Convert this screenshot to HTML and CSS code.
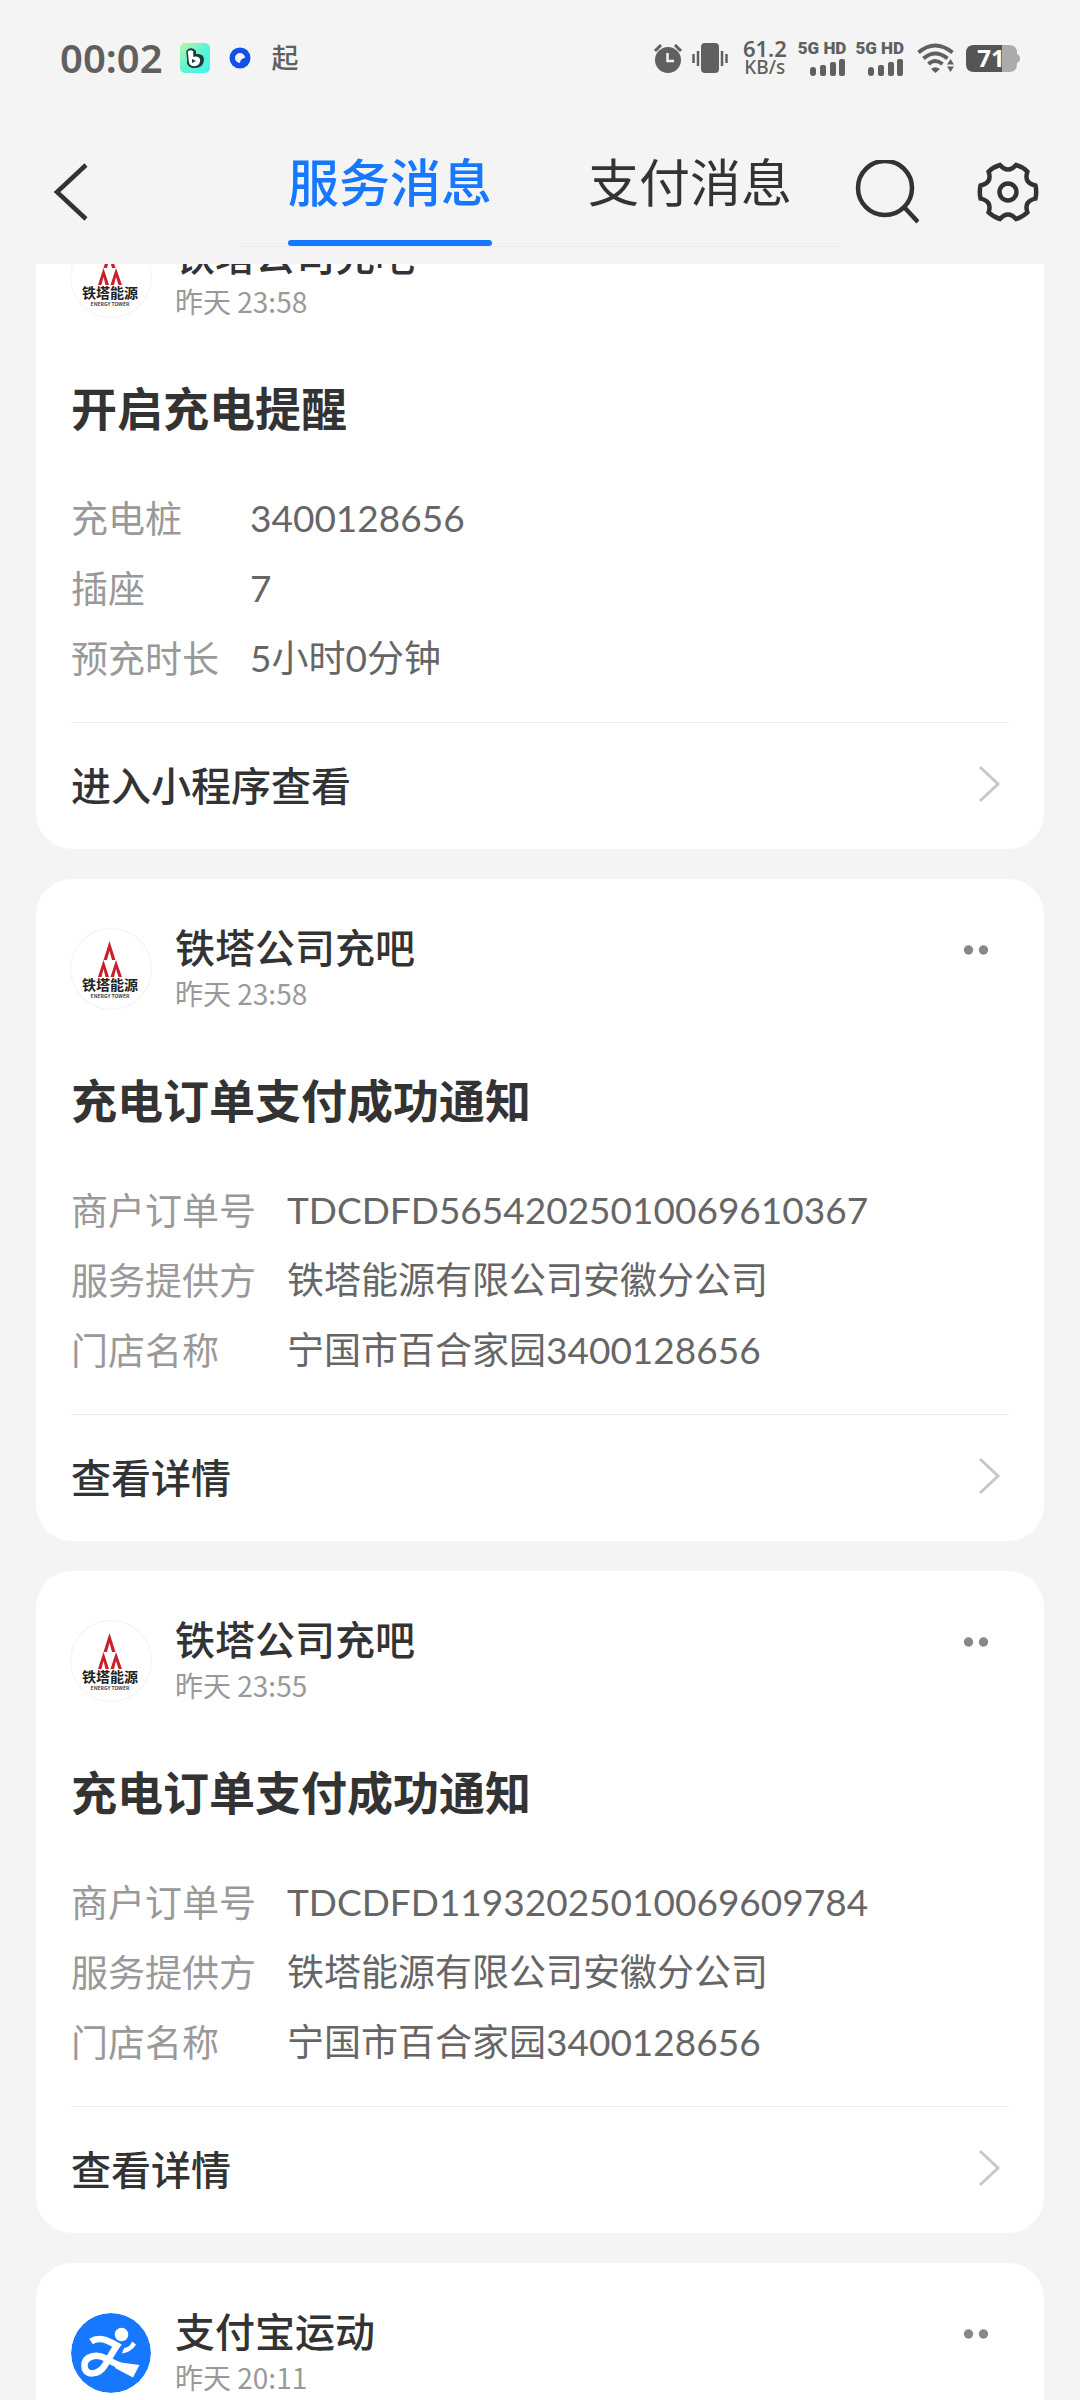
FILE: index.html
```html
<!DOCTYPE html>
<html lang="zh-CN">
<head>
<meta charset="utf-8">
<meta name="viewport" content="width=device-width, initial-scale=1">
<title>服务消息</title>
<link rel="stylesheet" href="styles.css">
</head>
<body>
<svg class="defs" aria-hidden="true">
  <symbol id="tower" viewBox="0 0 80 80">
    <g fill="#c8202c">
      <path d="M38.500 12L44.500 31H41L38.500 22L36 31H32.500Z"/>
      <path d="M32.500 31L38 48H34.500L32.500 40L30.500 48H27Z"/>
      <path d="M45 31L51 48H47.500L45 40L43 48H39.500Z"/>
    </g>
    <text x="39" y="61" class="tower-cn">铁塔能源</text>
    <text x="39" y="69" class="tower-en">ENERGY TOWER</text>
  </symbol>
  <symbol id="next" viewBox="0 0 24 40">
    <path d="M3 3L21 20L3 37" fill="none" stroke="#c8c8c8" stroke-width="3"/>
  </symbol>
  <symbol id="dots" viewBox="0 0 26 12">
    <circle cx="5.500" cy="6" r="4.700" fill="#888"/><circle cx="20.500" cy="6" r="4.700" fill="#888"/>
  </symbol>
  <symbol id="signal" viewBox="0 0 36 17">
    <rect x="0" y="8" width="6" height="9" rx="3"/><rect x="10" y="6" width="6" height="11" rx="2"/><rect x="20" y="3" width="6" height="14" rx="2"/><rect x="29" y="0" width="6" height="17" rx="2"/>
  </symbol>
</svg>

<div class="app">
  <header class="top">
    <div class="status">
      <span class="clock">00:02</span>
      <svg class="app-b" viewBox="0 0 30 30" width="30" height="30">
        <defs><linearGradient id="bg" x1="0" y1="0" x2="1" y2="1"><stop offset="0" stop-color="#b9f5a8"/><stop offset=".5" stop-color="#5ff3d0"/><stop offset="1" stop-color="#3ff5f5"/></linearGradient></defs>
        <rect width="30" height="30" rx="5" fill="url(#bg)"/>
        <path d="M8 6Q13 4 16 8V11Q24 10 24 17Q23 25 15 25Q8 25 7 20Z" fill="#1c3a38"/>
        <path d="M7 8Q11 5 14 8V13Q20 12 21 17Q21 23 15 24Q8 24 8 18Z" fill="#fff" stroke="#1c3a38" stroke-width="1.500"/>
        <path d="M12 16L16 18L12 20Z" fill="#1c3a38"/>
      </svg>
      <svg class="app-o" viewBox="0 0 22 22" width="22" height="22">
        <circle cx="11" cy="11" r="10.500" fill="#1450e6"/>
        <path d="M16 11A5 5 0 1 0 11 16Q11 13 13 12Q14 11 16 11Z" fill="#f4f4f4"/>
      </svg>
      <span class="qi">起</span>
      <div class="sys">
        <svg viewBox="0 0 30 30" width="30" height="30">
          <circle cx="15" cy="17" r="13"/><path d="M2 8L8 2M28 8L22 2" stroke="#606060" stroke-width="3"/><path d="M14.500 10V18H21" fill="none" stroke="#f4f4f4" stroke-width="2.500"/>
        </svg>
        <svg viewBox="0 0 36 30" width="36" height="30">
          <rect x="9" y="0" width="18" height="30" rx="4"/><path d="M1.500 11V20M6 8V23M34.500 11V20M30 8V23" stroke="#606060" stroke-width="2.500"/>
        </svg>
        <span class="rate"><b>61.2</b><span>KB/s</span></span>
        <span class="sim"><b>5G HD</b><svg viewBox="0 0 36 17" width="36" height="17"><use href="#signal"/></svg></span>
        <span class="sim"><b>5G HD</b><svg viewBox="0 0 36 17" width="36" height="17"><use href="#signal"/></svg></span>
        <svg class="wifi" viewBox="0 0 38 30" width="38" height="30">
          <g fill="none" stroke="#606060" stroke-width="4"><path d="M1.500 9.500Q18 -4.500 35.500 9.500"/><path d="M6.500 15.500Q18 5.500 30.500 15.500"/><path d="M11.500 21Q18 15 25.500 21"/></g>
          <path d="M14 26Q18 22.500 23 26L18.500 30Z"/><path d="M33.500 16L37 21.500H30ZM33.500 29L37 23.500H30Z"/>
        </svg>
        <svg class="battery" viewBox="0 0 54 27" width="54" height="27">
          <path d="M36 0H43Q51 0 51 8V9Q54 10 54 13.500Q54 17 51 18V19Q51 27 43 27H36Z" fill="#ababab"/>
          <path d="M8 0H36V27H8Q0 27 0 19V8Q0 0 8 0Z" fill="#555"/>
          <text x="25" y="22" class="pct">71</text>
        </svg>
      </div>
    </div>
    <nav class="nav">
      <button class="back" aria-label="返回"><svg viewBox="0 0 36 60" width="36" height="60"><path d="M33 3L4 30L33 57" fill="none" stroke="#333" stroke-width="4.500"/></svg></button>
      <div class="tabs">
        <button class="tab active">服务消息</button>
        <button class="tab">支付消息</button>
      </div>
      <div class="tools">
        <button aria-label="搜索"><svg viewBox="0 0 64 64" width="64" height="64"><g fill="none" stroke="#333" stroke-width="4.500"><circle cx="30" cy="28" r="27"/><path d="M49 47L63 62"/></g></svg></button>
        <button aria-label="设置"><svg viewBox="-32 -32 64 64" width="64" height="64"><g fill="none" stroke="#333" stroke-width="4.500"><circle r="8.500"/><path d="M-8 -27Q0 -18 8 -27A28 28 0 0 1 19.400 -20.400Q15.600 -9 27.400 -6.600A28 28 0 0 1 27.400 6.600Q15.600 9 19.400 20.400A28 28 0 0 1 8 27Q0 18 -8 27A28 28 0 0 1 -19.400 20.400Q-15.600 9 -27.400 6.600A28 28 0 0 1 -27.400 -6.600Q-15.600 -9 -19.400 -20.400A28 28 0 0 1 -8 -27Z"/></g></svg></button>
      </div>
    </nav>
  </header>

  <main class="feed">
    <div class="list">
      <article class="card">
        <div class="head">
          <svg class="avatar ring" viewBox="0 0 80 80"><use href="#tower"/></svg>
          <div class="who"><div class="name">铁塔公司充吧</div><time class="time">昨天 23:58</time></div>
          <button class="more" aria-label="更多"><svg width="26" height="12"><use href="#dots"/></svg></button>
        </div>
        <h2 class="title">开启充电提醒</h2>
        <dl class="rows">
          <dt>充电桩</dt><dd>3400128656</dd>
          <dt>插座</dt><dd>7</dd>
          <dt>预充时长</dt><dd>5小时0分钟</dd>
        </dl>
        <a class="foot" href="#">进入小程序查看<svg width="24" height="40"><use href="#next"/></svg></a>
      </article>

      <article class="card">
        <div class="head">
          <svg class="avatar ring" viewBox="0 0 80 80"><use href="#tower"/></svg>
          <div class="who"><div class="name">铁塔公司充吧</div><time class="time">昨天 23:58</time></div>
          <button class="more" aria-label="更多"><svg width="26" height="12"><use href="#dots"/></svg></button>
        </div>
        <h2 class="title">充电订单支付成功通知</h2>
        <dl class="rows">
          <dt>商户订单号</dt><dd>TDCDFD56542025010069610367</dd>
          <dt>服务提供方</dt><dd>铁塔能源有限公司安徽分公司</dd>
          <dt>门店名称</dt><dd>宁国市百合家园3400128656</dd>
        </dl>
        <a class="foot" href="#">查看详情<svg width="24" height="40"><use href="#next"/></svg></a>
      </article>

      <article class="card">
        <div class="head">
          <svg class="avatar ring" viewBox="0 0 80 80"><use href="#tower"/></svg>
          <div class="who"><div class="name">铁塔公司充吧</div><time class="time">昨天 23:55</time></div>
          <button class="more" aria-label="更多"><svg width="26" height="12"><use href="#dots"/></svg></button>
        </div>
        <h2 class="title">充电订单支付成功通知</h2>
        <dl class="rows">
          <dt>商户订单号</dt><dd>TDCDFD11932025010069609784</dd>
          <dt>服务提供方</dt><dd>铁塔能源有限公司安徽分公司</dd>
          <dt>门店名称</dt><dd>宁国市百合家园3400128656</dd>
        </dl>
        <a class="foot" href="#">查看详情<svg width="24" height="40"><use href="#next"/></svg></a>
      </article>

      <article class="card last">
        <div class="head">
          <svg class="avatar" viewBox="0 0 80 80">
            <circle cx="40" cy="40" r="40" fill="#1677ff"/>
            <circle cx="50.500" cy="21.500" r="6.800" fill="#fff"/>
            <path d="M20 28.500C28 23 36 27 46 32.500C42 38 38 46 34 52C28 62 14 64 13.500 53C13 43 26 40 36 46C44 51 54 55 64 57.500" fill="none" stroke="#fff" stroke-width="6.500"/>
            <path d="M46 49L68.500 52L62 64.500L44 55Z" fill="#fff"/>
            <path d="M65 31.500C62 36 58 39.500 51 40.500L53 35C57 34.500 60 32 61 28.500Z" fill="#fff"/>
          </svg>
          <div class="who"><div class="name">支付宝运动</div><time class="time">昨天 20:11</time></div>
          <button class="more" aria-label="更多"><svg width="26" height="12"><use href="#dots"/></svg></button>
        </div>
      </article>
    </div>
  </main>
</div>
</body>
</html>
```
FILE: styles.css
```css
* { box-sizing: border-box; }

body {
  margin: 0;
  background: #f4f4f4;
  color: #333;
  font-family: "Noto Sans CJK SC", sans-serif;
}

button {
  padding: 0;
  border: 0;
  background: none;
  color: inherit;
  font: inherit;
}

svg { display: block; flex: none; }

.defs { position: absolute; width: 0; height: 0; }

.app {
  display: flex;
  flex-direction: column;
  height: 100vh;
}

.top {
  position: relative;
  z-index: 1;
  flex: none;
  padding-bottom: 17px;
  background: #f4f4f4;
}

/* system status bar */
.status {
  display: flex;
  align-items: center;
  height: 116px;
  padding: 0 60px;
  color: #606060;
  fill: #606060;
  font-family: "Noto Sans", "Noto Sans CJK SC", sans-serif;
}

.clock { font-size: 40px; line-height: 60px; font-weight: 600; }
.app-b { margin-left: 17px; }
.app-o { margin-left: 19px; }
.qi { margin-left: 21px; font-size: 27px; line-height: 40px; font-weight: 500; }

.sys {
  display: flex;
  align-items: center;
  gap: 9px;
  margin-left: auto;
}

.rate {
  display: flex;
  flex-direction: column;
  align-items: center;
  margin: 0 2px 0 6px;
  font-size: 19px;
  line-height: 19px;
  font-weight: 500;
}
.rate b { font-size: 22px; font-weight: 600; }

.sim {
  display: flex;
  flex-direction: column;
  align-items: flex-end;
  gap: 3px;
  font: 700 17px/16px Roboto, sans-serif;
}

.wifi { margin-left: 4px; }
.battery { margin-left: 2px; }
.pct { fill: #fff; font-size: 24px; font-weight: 700; text-anchor: middle; }

/* navigation */
.nav {
  display: grid;
  grid-template-columns: 240px 1fr 240px;
}

.back { padding: 20px 0 0 53px; }

.tabs {
  display: flex;
  border-bottom: 1px solid #ececec;
}

.tab {
  display: flex;
  flex: 1;
  flex-direction: column;
  align-items: center;
  padding-top: 34px;
  font-size: 51px;
  line-height: 60px;
}
.tab::after {
  content: "";
  width: 204px;
  height: 6px;
  margin-top: 30px;
  border-radius: 3px;
}
.tab.active { color: #1677ff; font-weight: 500; }
.tab.active::after { background: #1677ff; }

.tools {
  display: flex;
  align-items: center;
  justify-content: flex-end;
  gap: 57px;
  padding: 20px 40px 0 0;
}

/* message feed */
.feed {
  flex: 1;
  min-height: 0;
  overflow: hidden;
}

.list {
  display: flex;
  flex-direction: column;
  gap: 30px;
  margin-top: -77px;
  padding: 0 36px;
}

.card {
  padding: 41px 35px 0;
  border-radius: 36px;
  background: #fff;
}
.card.last { padding-bottom: 60px; }

.head { display: flex; align-items: center; }

.avatar { width: 80px; height: 80px; border-radius: 50%; }
.avatar.ring { box-shadow: 0 0 0 1px #f2f2f2; }
.tower-cn { fill: #222; font-size: 14px; font-weight: 700; text-anchor: middle; }
.tower-en { fill: #444; font-size: 5px; font-weight: 700; text-anchor: middle; }

.who { flex: 1; margin-left: 24px; padding-bottom: 4px; }
.name { font-size: 40px; line-height: 52px; font-weight: 500; }
.time { display: block; color: #999; font-size: 28px; line-height: 42px; }

.more { align-self: flex-start; padding: 24px 20px; }

.title {
  margin: 48px 0 45px;
  font-size: 46px;
  line-height: 64px;
  font-weight: 600;
}

.rows {
  display: grid;
  grid-template-columns: max-content 1fr;
  column-gap: 31px;
  margin: 0;
  font-size: 37px;
  line-height: 70px;
}
.rows dt { color: #999; line-height: 68px; }
.rows dd { margin: 0; color: #666; font-family: Lato, "Noto Sans CJK SC", sans-serif; }

.foot {
  display: flex;
  align-items: center;
  justify-content: space-between;
  height: 127px;
  margin-top: 29px;
  padding: 0 8px 5px 0;
  border-top: 1px solid #eee;
  color: inherit;
  font-size: 40px;
  font-weight: 500;
  text-decoration: none;
}
```
